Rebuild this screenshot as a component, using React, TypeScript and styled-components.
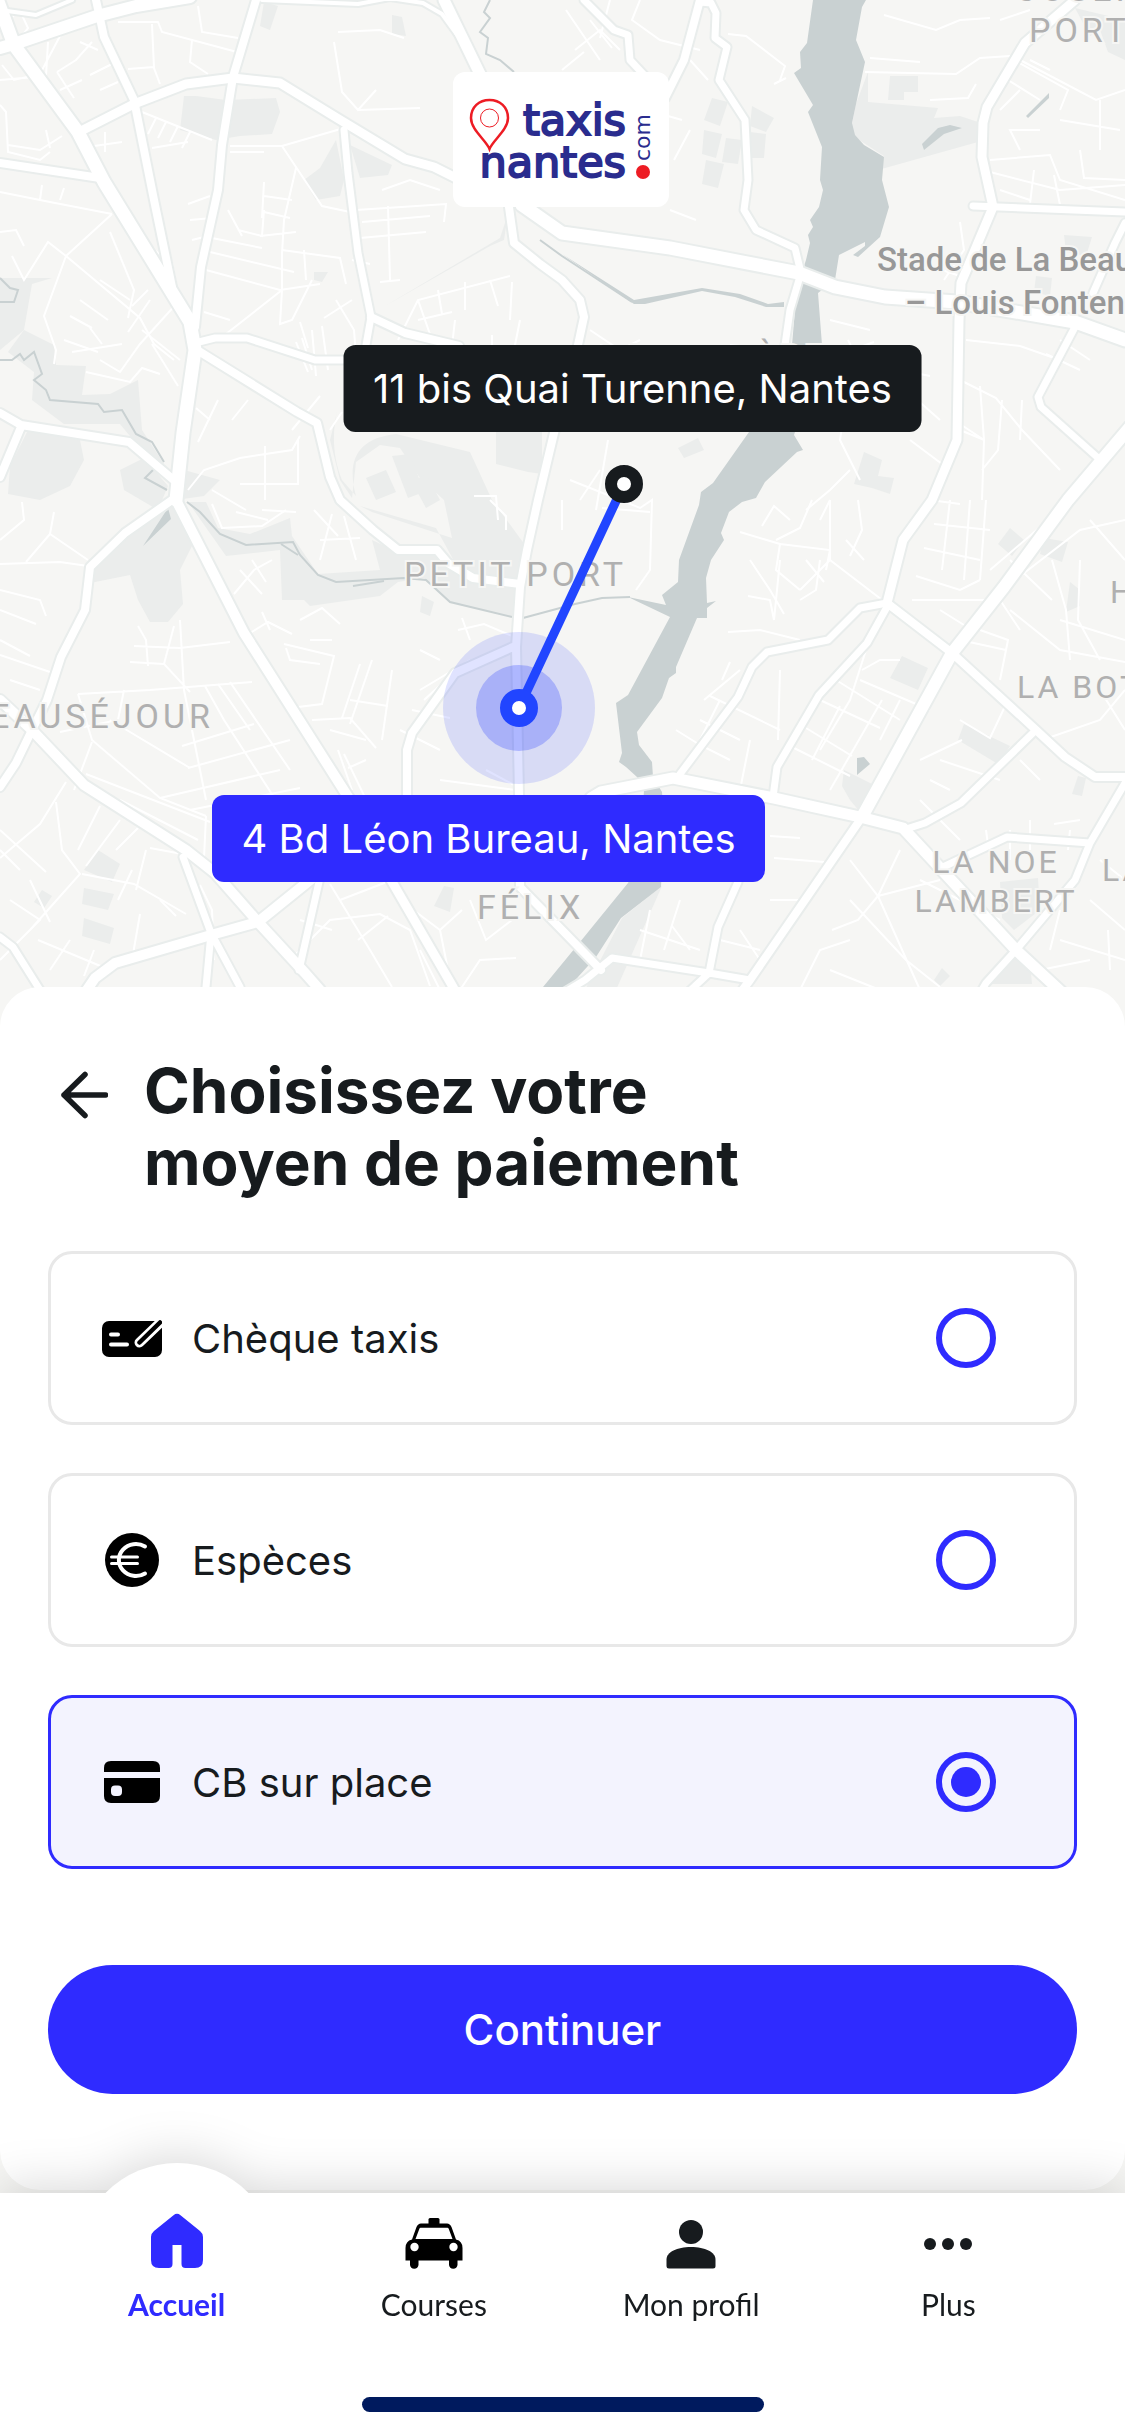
import React, { useState } from 'react';
import styled, { createGlobalStyle } from 'styled-components';

const GlobalStyle = createGlobalStyle`
  * {
    box-sizing: border-box;
  }

  body {
    margin: 0;
    background: #f6f6f4;
    color: #171b1e;
    font-family: Inter, 'Liberation Sans', sans-serif;
  }
`;

const Page = styled.div`
  min-height: 100vh;
  display: flex;
  flex-direction: column;
  overflow-x: hidden;
`;

const MapArea = styled.header`
  position: relative;
  height: 1027px;
  overflow: hidden;
`;

const MapCanvas = styled.svg`
  display: block;
  width: 100%;
  height: 100%;

  .park {
    fill: #ebedec;
  }

  .water {
    fill: #c9d1d2;
  }

  .stream {
    fill: none;
    stroke: #c9d1d2;
    stroke-width: 2;
  }

  .street {
    fill: none;
    stroke: #fff;
    stroke-width: 2;
  }

  .casing {
    stroke: #e9edec;
  }

  .road {
    stroke: #fff;
  }

  .casing,
  .road {
    fill: none;
    stroke-linejoin: round;
    stroke-linecap: round;
  }
`;

const AreaLabel = styled.text<{ $small?: boolean }>`
  font-family: Roboto, sans-serif;
  font-size: ${(props) => (props.$small ? 32 : 34)}px;
  letter-spacing: ${(props) => (props.$small ? 3 : 4)}px;
  fill: #b0b0b0;
  stroke: #f6f6f4;
  stroke-width: 4px;
  paint-order: stroke;
`;

const PlaceLabel = styled.text`
  font: 500 33px Roboto, sans-serif;
  fill: #989898;
  stroke: #f6f6f4;
  stroke-width: 4px;
  paint-order: stroke;
`;

const LogoCard = styled.div`
  position: absolute;
  top: 72px;
  left: calc(50% - 2px);
  width: 216px;
  height: 135px;
  border-radius: 12px;
  background: #fff;
  transform: translateX(-50%);

  svg {
    display: block;
  }
`;

const LogoText = styled.text<{ $size: number; $weight: number }>`
  font-family: 'DejaVu Sans', sans-serif;
  font-size: ${(props) => props.$size}px;
  fill: #2a2c8e;
  stroke: #2a2c8e;
  stroke-width: ${(props) => props.$weight}px;
`;

const Address = styled.div<{ $top: number; $shift: number; $color: string }>`
  position: absolute;
  top: ${(props) => props.$top}px;
  left: calc(50% + ${(props) => props.$shift}px);
  padding: 0 30px;
  border-radius: 12px;
  background: ${(props) => props.$color};
  color: #fff;
  font-size: 40px;
  line-height: 87px;
  white-space: nowrap;
  transform: translateX(-50%);
`;

const Sheet = styled.main`
  position: relative;
  margin-top: -40px;
  margin-bottom: 3px;
  padding: 68px 48px 96px;
  border-radius: 40px;
  background: #fff;
`;

const SheetHeader = styled.div`
  display: flex;
  gap: 36px;
  padding-left: 12px;
  margin-bottom: 52px;
`;

const BackButton = styled.button`
  width: 48px;
  height: 48px;
  margin-top: 16px;
  padding: 0;
  border: 0;
  background: none;
  color: inherit;

  svg {
    display: block;
  }
`;

const Title = styled.h1`
  margin: 0;
  font-size: 62px;
  font-weight: 700;
  line-height: 72px;
`;

const Options = styled.div`
  display: flex;
  flex-direction: column;
  gap: 48px;
`;

const Option = styled.label<{ $selected: boolean }>`
  display: flex;
  align-items: center;
  gap: 30px;
  height: 174px;
  padding: 0 78px 0 51px;
  border: 3px solid ${(props) => (props.$selected ? '#2f2bff' : '#e8e8e8')};
  border-radius: 24px;
  background: ${(props) => (props.$selected ? '#f3f3fe' : '#fff')};
  font-size: 40px;
`;

const OptionName = styled.span`
  flex: 1;
`;

const Radio = styled.input`
  appearance: none;
  display: grid;
  place-items: center;
  width: 60px;
  height: 60px;
  margin: 0;
  border: 6px solid #2f2bff;
  border-radius: 50%;

  &:checked::after {
    content: '';
    width: 30px;
    height: 30px;
    border-radius: 50%;
    background: #2f2bff;
  }
`;

const ContinueButton = styled.button`
  display: block;
  width: 100%;
  height: 129px;
  margin-top: 96px;
  border: 0;
  border-radius: 65px;
  background: #2f2bff;
  color: #fff;
  font: 500 42px Inter, sans-serif;
`;

const BottomBar = styled.footer`
  position: relative;
  z-index: 1;
  display: flex;
  flex-direction: column;
  align-items: center;
  gap: 75px;
  padding: 18px 48px 24px;
  background: #fff;
  filter: drop-shadow(0 -6px 24px rgba(0, 0, 0, 0.15));
`;

const Tabs = styled.nav`
  display: grid;
  grid-template-columns: repeat(4, 1fr);
  width: 100%;
`;

const Tab = styled.a<{ $active?: boolean }>`
  position: relative;
  display: flex;
  flex-direction: column;
  align-items: center;
  gap: 15px;
  color: ${(props) => (props.$active ? '#2f2bff' : '#171b1e')};
  font-family: Lato, sans-serif;
  font-size: 30px;
  font-weight: ${(props) => (props.$active ? 700 : 400)};
  line-height: 36px;
  text-decoration: none;

  &::before {
    content: '';
    display: ${(props) => (props.$active ? 'block' : 'none')};
    position: absolute;
    top: -48px;
    left: 50%;
    z-index: -1;
    width: 200px;
    height: 200px;
    border-radius: 50%;
    background: #fff;
    transform: translateX(-50%);
  }
`;

const HomeIndicator = styled.div`
  width: 402px;
  height: 15px;
  border-radius: 8px;
  background: #001a5e;
`;

const parks = [
  'M196 96L226 100 276 98 280 112 272 134 240 136 216 140 180 130 184 96Z',
  'M264 2L278 6 270 30 260 26Z',
  'M392 15L402 17 406 36 392 34Z',
  'M336 140L344 180 340 196 316 200 304 180 320 168Z',
  'M350 145L392 165 388 175 360 178Z',
  'M385 306L500 238 508 214 504 240 490 246Z',
  'M314 272L328 272 322 282 314 280Z',
  'M0 278H52L32 284 24 330 0 350Z',
  'M24 330L54 345 56 365 86 366 82 395 110 394 138 380 142 430 164 464 158 470 120 424 64 424 32 400 34 372 8 352Z',
  'M28 430L80 440 84 460 70 486 40 500 8 494 10 466Z',
  'M120 470L144 458 168 486 158 510 124 490Z',
  'M184 470L220 480 204 496 176 500Z',
  'M124 532L170 502 194 542 180 570 183 604 168 622 150 622 138 600 130 575 90 583 92 566Z',
  'M188 502L206 502 218 528 250 534 290 518 292 536 318 574 380 570 372 540 398 552 438 552 452 568 474 580 516 586 518 618 450 602 424 578 398 582 380 596 310 606 304 600 282 600 280 550 226 556Z',
  'M338 408C332 430 332 455 342 480L356 496C346 460 358 438 396 434L470 452 492 500 525 545 516 580 460 572 436 528 360 506 372 512 452 538 444 500 420 478 400 448 380 445 356 462 352 498 340 480 330 440Z',
  'M392 456L410 454 424 492 408 498ZM366 478L386 470 396 492 376 500ZM412 482L426 474 440 500 426 508Z',
  'M496 432H542V474L528 472 496 464Z',
  'M422 596L434 602 430 616 420 612Z',
  'M98 850L120 864 112 882 84 870ZM84 888L114 894 108 910 82 904ZM84 918L114 928 110 944 82 936ZM42 890L52 896 44 908 34 902Z',
  'M444 886L454 888 450 912 434 906Z',
  'M712 98L728 102 720 126 704 120ZM752 106L774 118 766 132 750 126ZM704 130L722 134 716 158 702 154ZM726 138L742 140 738 164 722 162ZM750 132L766 134 764 158 750 158ZM706 160L724 164 718 188 702 184Z',
  'M868 72V102L938 108 934 118 960 116 978 122V142L878 170 884 156 850 134 856 104ZM890 76H918V92H904V100H888Z',
  'M1064 235L1092 237 1086 256 1066 252ZM1036 276L1052 278 1050 296 1034 292Z',
  'M1075 8L1125 20V60L1108 52 1100 30 1090 36Z',
  'M678 448L698 438 704 450 684 458ZM864 452L882 460 878 476 894 478 890 494 872 488 854 484Z',
  'M1010 528L1024 540 1012 556 998 544ZM1044 538L1068 542 1062 562 1040 554Z',
  'M902 656L928 668 918 690 890 678ZM964 724L1010 746 998 764 958 740Z',
  'M844 770L872 784 860 812 850 800 842 786Z',
  'M1070 582L1080 590 1080 606 1066 612ZM1078 776L1086 778 1082 796 1072 794Z',
  'M1000 882L1038 878 1040 910 1014 930 1002 918ZM1012 954L1030 962 1032 984H990ZM942 968L950 976 940 986 934 980Z',
  'M662 886L616 990H585L622 918Z',
];

const streams = [
  'M490 0L484 12 490 18 480 32 488 38 486 54 500 60 514 72',
  'M0 278L10 288 18 290 14 302 0 302',
  'M0 360L12 360 20 354 24 360 34 352 42 374 34 380 46 390 50 400 98 404 104 412 122 410 136 434 152 442 164 462',
  'M154 469L145 478 167 490',
  'M187 502L200 512 220 534 246 545 293 542 300 555 318 575 336 582 404 578 426 580 450 602 512 617',
  'M281 544L298 555 M353 586L384 581 M523 618L575 604 602 598 630 597',
  'M540 240L562 256 632 302',
];

const streets = [
  'M118 22L158 22 162 32 237 52 M198 6L202 32 238 38 M152 24L154 68 160 84 M192 40L190 62 208 74 M128 69L154 67',
  'M57 72L76 60 92 42 M57 72L66 86 74 98 M90 75L112 64 M100 90L118 82 M60 90L82 80 M80 42L98 50',
  'M10 20L14 15 22 15 28 28 20 38 10 34Z M2 65L14 80 40 74 60 36 M0 80L46 76 48 42',
  'M0 105L6 112 8 152 40 160 50 152 M8 145L40 150 62 136 M46 130L50 148 M105 132V152 M94 146L122 142 M142 112L212 140 M156 118L148 134 M166 122L158 138 M178 126L170 142 M190 132L182 148 M152 148L188 142',
  'M0 192L50 202 112 214 M42 185L40 200 M64 188L60 200 M112 214L66 256 48 242 24 280 12 256 M66 256L140 318 154 344 174 360 M66 256L44 316 56 350 54 364 M0 232L16 230 24 246',
  'M110 232L134 290 128 318 M124 222L138 250 M100 280L130 300 M80 300L108 320 M70 316L92 328 M64 340L98 352 M154 250L172 262 176 284 M178 302L140 344 120 372 100 360 M86 372L130 382 142 368 160 374',
  'M72 352L122 344 M90 328L102 344 M150 300L128 332 M132 306L148 290 M142 330L180 360 M152 344L178 386',
  'M230 146L282 146 344 128 M230 152H264 M282 146L322 206 350 212 M296 168L284 220 282 254 M264 182L262 218 M264 196L292 200 M264 212L290 218 M260 236L296 232',
  'M212 238L262 248 M210 252L294 272 M206 270L280 290 320 284 M282 250L340 258 346 284 M282 252V290L280 324 292 320 312 280 M304 250L306 280 M226 334L282 290 M204 312L230 320 M338 32L380 30 404 38 M334 42L342 92 358 110 376 90 M358 110L420 108',
  'M228 210L242 236 M238 230L262 236 264 210 M188 204L210 196 M190 220L212 218 M192 240L208 236',
  'M356 210L446 204 444 222 M360 238L426 232 M388 206L390 280 M362 222L430 216 M382 190L410 180 440 190 M352 260L370 264 M380 282L400 280',
  'M398 340L418 300 510 276 M418 300L432 340 M438 290L442 314 M418 320L452 312 M465 282V310 M490 280L498 306 M512 282L510 320 M455 320L452 346 M492 335V348 M520 320L514 350',
  'M296 342L308 372 M302 338L312 370 M312 330L316 376 M322 326L328 370 M336 300L354 330 356 356 M324 318L352 300 M308 348L300 322',
  'M188 490L204 470 240 458 292 450 300 436 M212 490L246 510 M265 446V500 M240 484L298 484 298 440 M218 400L198 442 M248 400L232 420 M320 396L292 430 M342 412L330 430 M196 408L210 420',
  'M262 510L296 512 M474 496H496L498 520 M490 500L506 516 506 530',
  'M0 564L60 562 88 566 M0 590L40 600 46 616 M0 610L36 624 M26 562L50 534 54 512 M0 540L24 520 22 502 M50 534L88 560 M0 640L30 656 M0 655L50 672 M10 680L40 690',
  'M138 626L146 640 148 666 M134 646L180 648 230 642 M180 620L184 690 206 800 M174 626L164 664 190 692 M164 664L130 662 M78 694L150 690 252 682 M78 694L92 740 160 798 206 816 M124 690L118 720 60 732',
  'M205 686L224 720 286 816 M218 684L250 730 M230 682L290 770 M182 746L254 724 M188 768L290 740 M160 798L280 770 M190 810L300 788 M206 816L204 858 150 848 M110 720L190 768 M92 742L74 790 M86 774L210 822 M120 800L198 840',
  'M284 644L334 656 322 704 290 708 M286 648L290 660 320 664 M372 660L350 724 M360 664L342 718 M392 670L382 740 M350 700L388 706 M312 720L350 718 376 748 M330 730L366 740 M338 750L352 790 M344 754L372 812 M348 768L366 760',
  'M242 638L268 622 292 634 M262 612L270 630 M300 620L322 608 340 624 M310 640L332 640',
  'M212 504L222 528 262 526 286 510 M236 512L268 520 M314 510L338 536 M332 514L320 560 M344 516L356 560 M320 540L360 538 M234 594L254 570 272 560 M240 570L262 594 M252 560L266 582',
  'M66 782L40 824 0 858 M56 802L62 850 80 874 30 930 M0 830L46 872 M0 850L20 870 M82 874L134 884 186 914 M120 820L86 866 M100 806L78 850 M138 828L116 850 M146 850L136 890 M132 870L118 900 M30 880L50 922 M10 900L40 920 0 960',
  'M70 940L50 970 M38 940L110 970 M140 914L132 960 M94 950L84 976 M160 900L176 916 M200 885L212 910 214 960',
  'M330 884L370 950 392 987 M290 960L330 920 380 914 410 930 430 986 M358 940L388 916 M340 900L392 880 420 860 M300 920L332 930 M400 900L440 930 462 910 M440 930L448 970 M420 950L440 990 M470 900L486 940 512 920 M460 990L480 960 516 958',
  'M400 730L440 750 M420 690L470 660 M412 710L450 718 M424 700L446 680 M440 660L420 650 M458 630L484 624 512 636 M470 640L462 618 M486 770L516 786 M440 780L516 790 M420 800L460 820',
  'M580 500L600 470 M570 480L640 508 652 500 650 570 636 590 M608 440L596 510 M562 530V500 M602 508L650 512',
  'M566 10L600 60 M575 50L600 30 620 50 M590 20L612 48 M562 70L584 52 M610 0L600 38 M640 0L632 20 660 40 700 50 M690 60L708 80 M728 34L746 36 785 66 780 80 M774 84L786 78 M690 130L674 160 M668 116L682 120 M670 210L696 220',
  'M884 15L936 30 960 20 990 18 M865 72L956 74 980 58 1010 56 M930 100L968 98 976 84 M870 58L920 62 M1000 20L1030 10 M1014 60L1068 90 1060 110 M1008 80L1040 100 M1000 110L1020 90 M1020 60L1096 100 1125 90',
  'M990 160L1050 155 1060 180 1125 200 M990 172L1060 190 1125 185 M1030 204L1034 170 M1060 205L1054 175 M1000 190L1030 200 M1080 150L1084 178 1125 180 M1060 120L1120 130 M1100 100V150 M1020 150L1010 130 1040 130 M1030 60L1050 70',
  'M960 222L964 250 944 280 M942 270L960 276 M960 380L996 398 1022 430 1060 470 M966 340L1020 346 1060 360 M980 386L984 440 960 430 M1002 400L998 450 982 470 M1022 400L1020 440 M954 420L984 440 982 500',
  'M848 340L868 380 900 410 M852 350L874 342 M846 400L840 440 860 480 M806 510L830 490 850 470 M830 500L820 520 M900 370L930 376 M906 390L940 420 M910 440L950 470 M830 320L870 330 M590 330L620 350 640 340 M600 345L650 360 M730 345L780 350',
  'M1080 370L1046 354 M1060 340L1090 360',
  'M740 532L780 544 776 570 800 590 M762 526L774 506 790 520 M776 540L800 528 812 500 M780 544L830 550 826 570 M800 590L830 560 M750 560L770 590 784 614 M748 596L770 600 774 620 780 560 M800 600L816 590 820 560',
  'M830 500L830 560 890 606 M846 540L864 560 M858 500L862 530 850 556 M806 560L824 582 M728 632L760 630 800 640 M730 662L722 680 M704 700L740 670 M676 730L700 745 730 760 M710 696L780 730 M700 720L740 740 M720 700L690 760 M780 670L778 740 M750 740L740 790',
  'M794 748L850 776 M806 728L852 756 M820 700L880 728 M836 680L900 720 M866 650L850 700 820 750 M882 700L830 790 M900 700L880 740 M860 680L930 710 M840 706L812 760 M862 670L880 660 900 660',
  'M930 500L960 504 M934 524L990 530 M924 548L980 560 M916 576L960 590 980 580 M950 500L942 570 M970 500L964 580 M986 500L980 580 M912 600L990 600 M990 570L1060 510 M1002 590L1080 530 1125 520 M1010 560L1052 600',
  'M1010 610L1060 650 1125 662 M1070 660L1066 610 1052 560 M980 630L1008 640 1000 680 M960 640L1006 650 M1080 560L1078 620 1100 660 M1090 520L1125 560 M1060 620L1125 640 M940 610L972 630 M1000 600L1020 630',
  'M960 720L990 738 1008 700 M940 760L1000 780 M930 780L950 790 M962 740L920 760 M920 800L960 840 M1020 760L1040 780 M1048 738L1100 720 1125 690 M1100 690L1125 730',
  'M986 830L990 860 M1010 830V860 M1030 820V850 M1054 824L1080 820 M1070 830L1068 850 M900 850L878 896 850 860 M878 896L858 920 832 930 M878 896L920 990 M878 896L940 880 M850 900L906 960 940 987 M920 880L1000 920',
  'M774 858L824 862 M770 900L810 900 M770 836L800 838 M640 930L700 950 M640 960L700 968 M672 926L690 950 M740 930L760 960 M720 940L760 950 M650 910L640 960 M680 900L664 950 M800 990L820 950 850 940 M830 970L880 990',
  'M1090 900L1125 930 M1100 860L1125 880 M1108 930L1110 970 M1060 940L1125 960 M1040 970L1090 960 M1060 910L1050 950',
];

const roads: { width: number; d: string }[] = [
  { width: 4, d: 'M0 10L36 15 72 0' },
  { width: 4, d: 'M262 0L358 4 390 -2 M390 -2L423 3 442 14 458 36' },
  { width: 8, d: 'M96 0L104 37 134 100 154 200 172 287' },
  { width: 8, d: 'M256 0L233 77 222 145 218 190 201 267 195 327' },
  { width: 9, d: 'M79 132L134 104 186 84 233 78 280 83 337 118 405 159 434 167 456 178' },
  { width: 8, d: 'M0 163L100 178' },
  { width: 7, d: 'M344 130L348 173 358 253 371 317 366 345' },
  { width: 8, d: 'M371 317L405 333 459 346' },
  { width: 7, d: 'M199 342L215 338 247 338 315 360 350 360' },
  { width: 8, d: 'M197 350L297 412 317 423 330 477 340 500 373 530 398 550 437 550 448 563 473 578 520 584' },
  { width: 8, d: 'M0 413L21 425 129 442 176 482 M21 427L0 477' },
  { width: 11, d: 'M444 0L462 37 480 74' },
  { width: 8, d: 'M508 200L514 243 540 264 562 280 580 300 584 317 578 345 554 433 538 500 527 550 520 587 516 647 519 795 520 887 562 930 601 970' },
  { width: 7, d: 'M584 0L614 30 628 35 630 60 645 76' },
  { width: 8, d: 'M700 0L684 60 665 98' },
  { width: 7, d: 'M700 2L711 3 716 13 715 38 727 47 719 80 745 120 748 180 744 210 756 230 795 248 801 273 790 310 785 345' },
  { width: 9, d: 'M1075 0L1025 43 987 107 983 123 982 157 993 207 961 283 959 320 957 440 932 500 903 540 887 603' },
  { width: 7, d: 'M973 206L1125 212 M1125 223L1115 243 1093 293' },
  { width: 7, d: 'M1075 327L1038 397 1041 407 1097 457' },
  { width: 7, d: 'M887 603L860 608 828 640 767 652 752 667 738 697 677 778' },
  { width: 7, d: 'M887 607L867 643 819 695 777 767 773 797 M738 882L718 927 709 973' },
  { width: 8, d: 'M887 603L952 653 1036 730 1065 757 1095 777 1125 777' },
  { width: 7, d: 'M1036 730L961 803 925 823 903 830' },
  { width: 7, d: 'M943 867L1007 837 1090 843 1125 783 M1090 843L1075 880 1016 950 986 983 970 1010' },
  { width: 7, d: 'M560 995L585 980 612 958 709 973 750 980 M709 973L680 1000' },
  { width: 8, d: 'M172 500L125 533 90 567 85 610 61 657 47 700 32 730 16 763 0 787' },
  { width: 7, d: 'M183 857L211 933 206 987 M211 933L240 987 M319 882L299 970 M0 937L13 947 40 990' },
  { width: 8, d: 'M513 647L455 673 412 733 407 750 407 795' },
  { width: 10, d: 'M0 700L32 730 84 785 186 850 215 873 258 922 305 973 320 990' },
  { width: 10, d: 'M80 1000L95 978 115 963 211 935 258 922 320 872' },
  { width: 9, d: 'M391 880L453 987 470 1020' },
  { width: 12, d: 'M1130 427L1068 500 1004 587 952 653 862 817' },
  { width: 8, d: 'M862 817L750 980 735 1000' },
  { width: 11, d: 'M591 798L601 792 673 778 774 798 860 817 903 828 1016 950 1070 1000' },
  { width: 12, d: 'M0 48L14 44 97 16 136 6 190 -3' },
  { width: 13, d: 'M-4 -4L14 45 78 132 104 182 190 322 195 350 183 433 176 500' },
  { width: 10, d: 'M176 500L244 633 350 800' },
  { width: 13, d: 'M522 205L562 233 670 248 799 273 835 287 885 297 957 302 1075 322 1125 340' },
];

const MapBackground = () => (
  <MapCanvas viewBox="0 0 1125 1027" preserveAspectRatio="xMidYMin slice" aria-label="Carte de Nantes" role="img">
    <rect width="1125" height="1027" fill="#f6f6f4" />
    {parks.map((d) => (
      <path key={d} className="park" d={d} />
    ))}
    {streets.map((d) => (
      <path key={d} className="street" d={d} />
    ))}
    {streams.map((d) => (
      <path key={d} className="stream" d={d} />
    ))}
    <path
      className="water"
      d="M813 0L807 43 800 52 801 68 794 73 813 105 808 112 822 147 820 180 823 190 819 207 810 220 813 227 808 235 810 243 806 260 797 287 795 310 792 345 749 432 713 483 701 492 699 505 679 560 678 582 662 595 666 605 628 597 670 617 628 695 616 703 622 753 619 762 626 767 637 777 644 790 640 860 628 883 580 942 543 987 520 1015H550L569 987 596 957 621 918 661 887 664 820 662 792 653 777 652 762 639 745 637 732 662 698 669 678 676 673 676 667 697 618 707 618 707 608 716 601 707 603 706 578 711 560 724 540 721 533 729 512 742 502 756 498 765 482 797 452 803 450 794 435 822 345 818 293 835 280 839 255 865 242V246L853 255 858 257 880 237 889 207 882 180 884 157 864 145 855 135 852 123 865 62 856 40 862 7 866 0Z"
    />
    <path className="water" d="M562 254L634 300 702 288 740 294 768 304 784 302V307H766L735 297 702 291 645 304H634Z" />
    <path className="water" d="M922 144L938 128 950 125 962 128 944 134 924 150ZM1026 116L1049 93V98L1028 118ZM168 508L143 546 171 519ZM857 758L864 757 870 764 857 775Z" />
    {roads.map(({ d, width }) => (
      <path key={d} className="casing" d={d} strokeWidth={width + 4} />
    ))}
    {roads.map(({ d, width }) => (
      <path key={d} className="road" d={d} strokeWidth={width} />
    ))}

    <AreaLabel x="1018" y="1">JOSEPH DE</AreaLabel>
    <AreaLabel x="1029" y="42">PORTERIE</AreaLabel>
    <AreaLabel x="619" y="369">JONELIÈRE</AreaLabel>
    <AreaLabel x="404" y="586">PETIT PORT</AreaLabel>
    <AreaLabel x="214" y="728" textAnchor="end">BEAUSÉJOUR</AreaLabel>
    <AreaLabel x="477" y="919">FÉLIX</AreaLabel>
    <AreaLabel x="1110" y="603" $small>HALVÊQUE</AreaLabel>
    <AreaLabel x="1017" y="698" $small>LA BOTTIÈRE</AreaLabel>
    <AreaLabel x="996" y="873" textAnchor="middle" $small>LA NOE</AreaLabel>
    <AreaLabel x="996" y="912" textAnchor="middle" $small>LAMBERT</AreaLabel>
    <AreaLabel x="1102" y="881" $small>LA</AreaLabel>
    <PlaceLabel x="877" y="271">Stade de La Beaujoire</PlaceLabel>
    <PlaceLabel x="905" y="314">– Louis Fonteneau</PlaceLabel>

    <circle cx="519" cy="708" r="76" fill="#2e46ff" fillOpacity="0.15" />
    <circle cx="519" cy="708" r="43" fill="#2e46ff" fillOpacity="0.28" />
    <path d="M624 484L519 708" stroke="#2145ff" strokeWidth="9" />
    <circle cx="624" cy="484" r="13" fill="#fff" stroke="#171b1e" strokeWidth="12" />
    <circle cx="519" cy="708" r="13" fill="#fff" stroke="#2145ff" strokeWidth="12" />
  </MapCanvas>
);

const Logo = () => (
  <LogoCard>
    <svg width="216" height="135" viewBox="0 0 216 135" aria-label="taxis nantes.com" role="img">
      <path
        d="M36.500 77C33 68 18 58 18 46C18 35 26 28 36.500 28S55 35 55 46C55 58 40 68 36.500 77Z"
        fill="none"
        stroke="#ed1c24"
        strokeWidth="2.500"
      />
      <circle cx="36.500" cy="46" r="9" fill="none" stroke="#ed1c24" strokeWidth="1" />
      <LogoText x="173" y="63" textAnchor="end" $size={43} $weight={2}>taxis</LogoText>
      <LogoText x="173" y="105" textAnchor="end" $size={43} $weight={2}>nantes</LogoText>
      <LogoText x="0" y="0" transform="translate(197 89) rotate(-90)" $size={22} $weight={0}>com</LogoText>
      <circle cx="190" cy="100" r="7" fill="#ed1c24" />
    </svg>
  </LogoCard>
);

const ChequeIcon = () => (
  <svg width="60" height="60" viewBox="0 0 60 60" aria-hidden="true">
    <rect y="13" width="60" height="36" rx="7" />
    <path d="M9 26.500H16M9 36.500H25" stroke="#fff" strokeWidth="4" strokeLinecap="round" />
    <path d="M62 11L37.500 34.500" stroke="#fff" strokeWidth="10" strokeLinecap="round" />
    <path d="M58 14.500L37.500 34.500" stroke="#000" strokeWidth="4.500" strokeLinecap="round" />
  </svg>
);

const EuroIcon = () => (
  <svg width="60" height="60" viewBox="0 0 60 60" aria-hidden="true">
    <circle cx="30" cy="30" r="27" />
    <g fill="none" stroke="#fff" strokeLinecap="round">
      <path d="M43 16.500A17 16 0 1 0 43 43.500" strokeWidth="4" />
      <path d="M9.500 27H35.500M9.500 33.500H35.500" strokeWidth="3" />
    </g>
  </svg>
);

const CardIcon = () => (
  <svg width="60" height="60" viewBox="0 0 60 60" aria-hidden="true">
    <path d="M2 20V16Q2 9 9 9H51Q58 9 58 16V20Z" />
    <path
      fillRule="evenodd"
      d="M2 26H58V44Q58 51 51 51H9Q2 51 2 44ZM13 33.500Q9 33.500 9 37.500V40Q9 44 13 44H16Q20 44 20 40V37.500Q20 33.500 16 33.500Z"
    />
  </svg>
);

const HomeIcon = () => (
  <svg width="60" height="60" viewBox="0 0 60 60" fill="currentColor" aria-hidden="true">
    <path d="M26.500 4.200Q30 1.500 33.500 4.200L53 20Q56 22.500 56 26V49Q56 57 48 57H38.500Q34.500 57 34.500 53V34H25.500V53Q25.500 57 21.500 57H12Q4 57 4 49V26Q4 22.500 7 20Z" />
  </svg>
);

const TaxiIcon = () => (
  <svg width="60" height="60" viewBox="0 0 60 60" aria-hidden="true">
    <rect x="24.500" y="7" width="11" height="8" rx="1.500" />
    <path
      fillRule="evenodd"
      d="M17 12.500H43Q46 12.500 47.500 16L52 28.500Q58.500 30 58.500 37V49.500H53.500V54A4.300 4.300 0 0 1 45 54V49.500H14.500V54A4.300 4.300 0 0 1 6 54V49.500H1.500V37Q1.500 30 8 28.500L12.500 16Q14 12.500 17 12.500ZM16.500 16.800Q15.700 16.800 15.300 18L11.500 28H48.500L44.800 18Q44.300 16.800 43.500 16.800Z"
    />
    <circle cx="10.500" cy="36" r="4.200" fill="#fff" />
    <circle cx="49.500" cy="36" r="4.200" fill="#fff" />
  </svg>
);

const ProfileIcon = () => (
  <svg width="60" height="60" viewBox="0 0 60 60" fill="currentColor" aria-hidden="true">
    <circle cx="30" cy="21" r="12" />
    <path d="M5.500 48.500C5.500 41 16 36 30 36S54.500 41 54.500 48.500V55Q54.500 57.500 52 57.500H8Q5.500 57.500 5.500 55Z" />
  </svg>
);

const MoreIcon = () => (
  <svg width="60" height="60" viewBox="0 0 60 60" fill="currentColor" aria-hidden="true">
    <circle cx="12" cy="33" r="6" />
    <circle cx="30" cy="33" r="6" />
    <circle cx="48" cy="33" r="6" />
  </svg>
);

const methods = [
  { id: 'cheque', label: 'Chèque taxis', Icon: ChequeIcon },
  { id: 'cash', label: 'Espèces', Icon: EuroIcon },
  { id: 'card', label: 'CB sur place', Icon: CardIcon },
];

const tabs = [
  { label: 'Accueil', Icon: HomeIcon },
  { label: 'Courses', Icon: TaxiIcon },
  { label: 'Mon profil', Icon: ProfileIcon },
  { label: 'Plus', Icon: MoreIcon },
];

const App = () => {
  const [method, setMethod] = useState('card');

  return (
    <Page>
      <GlobalStyle />
      <MapArea>
        <MapBackground />
        <Logo />
        <Address $top={345} $shift={70} $color="#171b1e">11 bis Quai Turenne, Nantes</Address>
        <Address $top={795} $shift={-74} $color="#2f2bff">4 Bd Léon Bureau, Nantes</Address>
      </MapArea>

      <Sheet>
        <SheetHeader>
          <BackButton type="button" aria-label="Retour">
            <svg width="48" height="48" viewBox="0 0 48 48" fill="none" stroke="currentColor" strokeWidth="5.500" strokeLinecap="round" strokeLinejoin="round">
              <path d="M45.500 24H4M25 3.500L4 24L25 44.500" />
            </svg>
          </BackButton>
          <Title>
            Choisissez votre
            <br />
            moyen de paiement
          </Title>
        </SheetHeader>

        <Options role="radiogroup" aria-label="Moyen de paiement">
          {methods.map(({ id, label, Icon }) => (
            <Option key={id} $selected={method === id}>
              <Icon />
              <OptionName>{label}</OptionName>
              <Radio type="radio" name="method" value={id} checked={method === id} onChange={() => setMethod(id)} />
            </Option>
          ))}
        </Options>

        <ContinueButton type="button">Continuer</ContinueButton>
      </Sheet>

      <BottomBar>
        <Tabs>
          {tabs.map(({ label, Icon }, index) => (
            <Tab key={label} href="#" $active={index === 0}>
              <Icon />
              {label}
            </Tab>
          ))}
        </Tabs>
        <HomeIndicator />
      </BottomBar>
    </Page>
  );
};

export default App;
